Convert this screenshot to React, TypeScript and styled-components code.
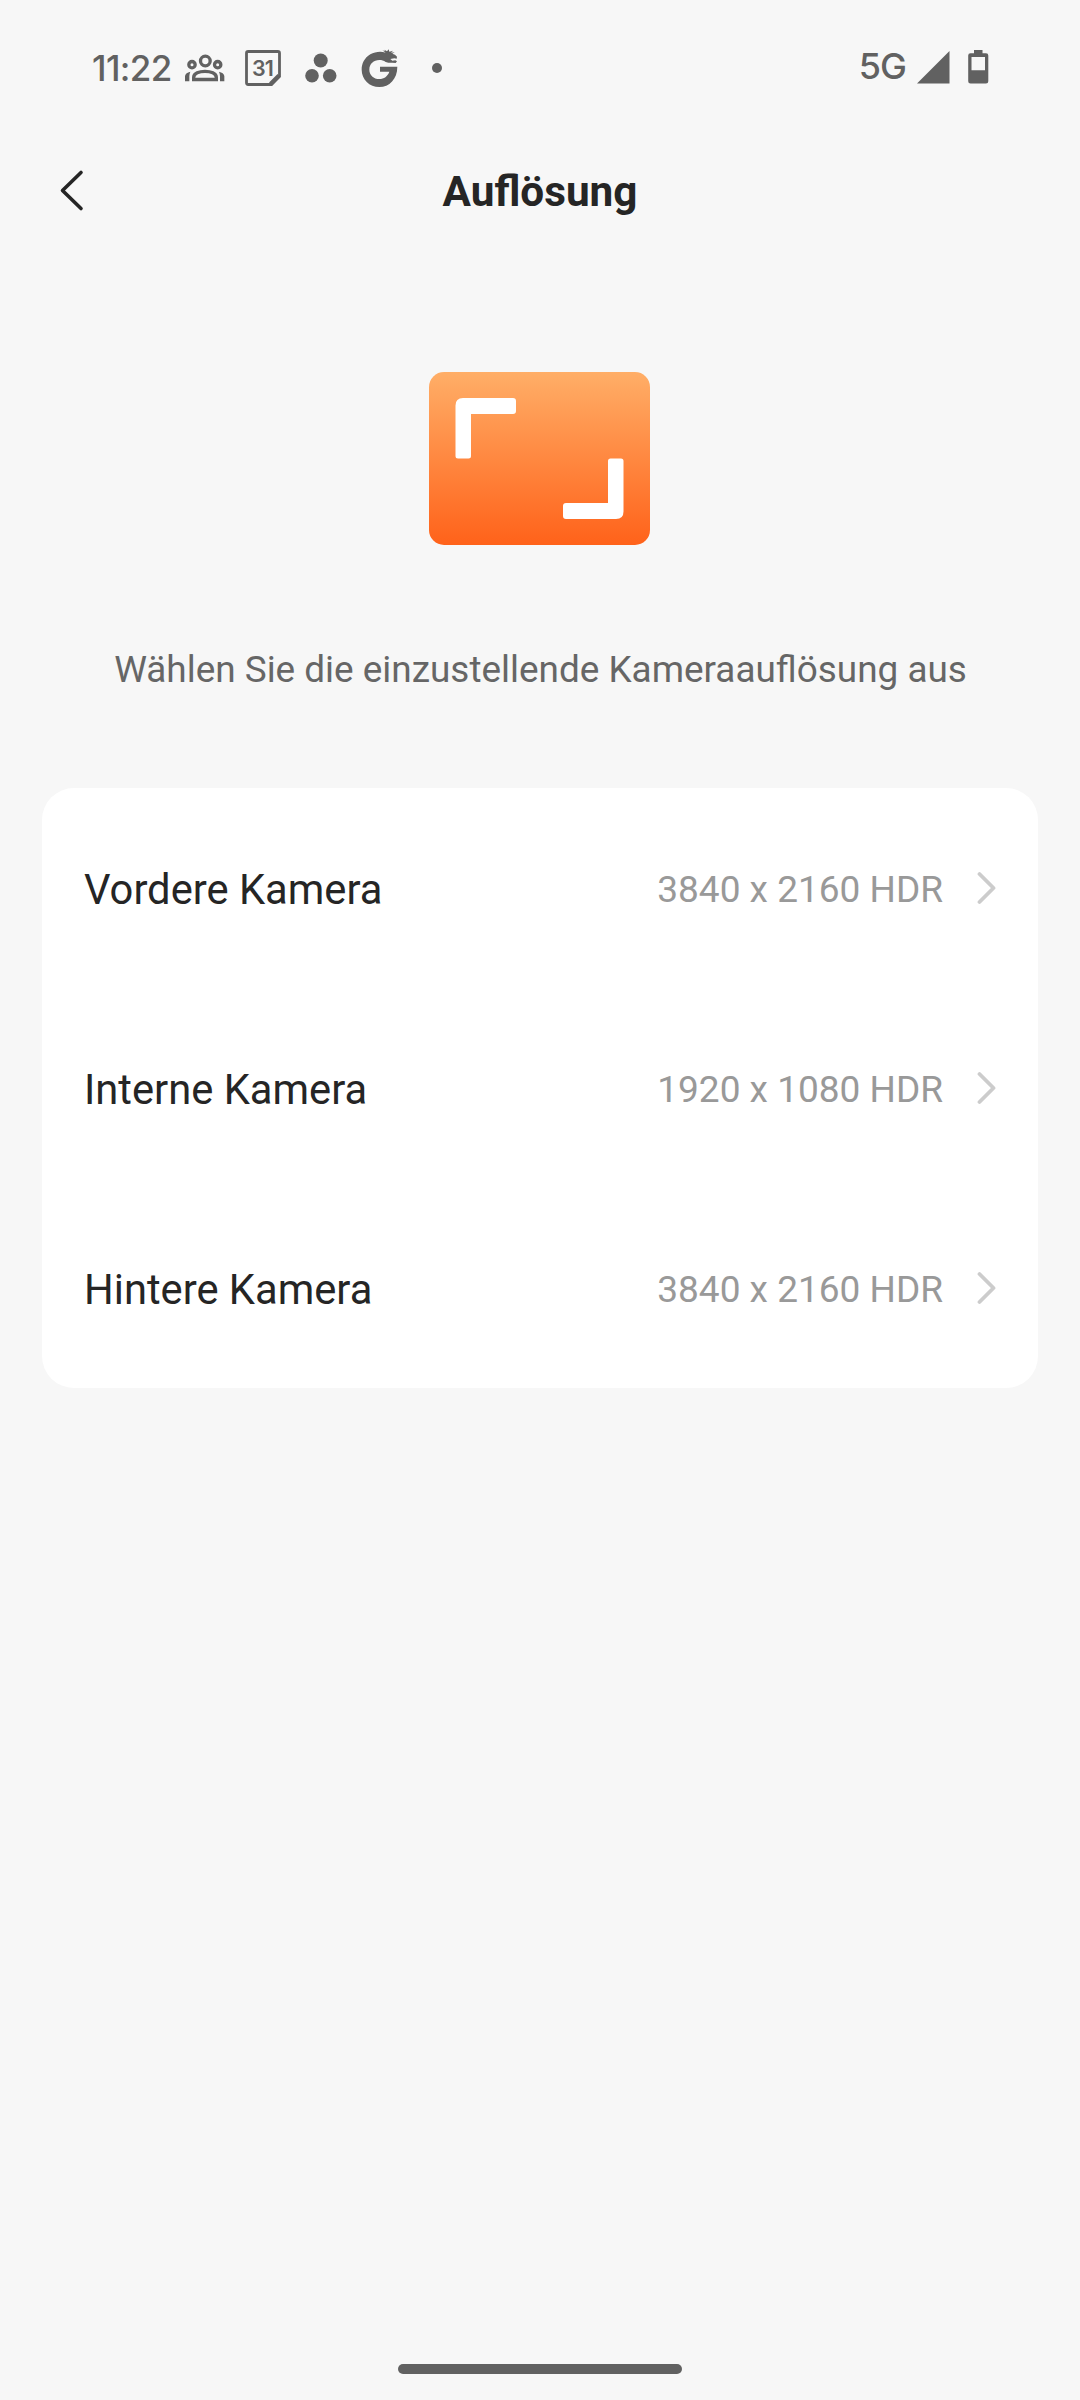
import React from "react";
import styled, { createGlobalStyle } from "styled-components";

const INK = "#616161";

const GlobalStyle = createGlobalStyle`
  *, *::before, *::after { box-sizing: border-box; }
  body { margin: 0; background: #f7f7f7; }
`;

const Screen = styled.div`
  display: flex;
  flex-direction: column;
  width: 1080px;
  height: 2400px;
  background: #f7f7f7;
  color: #252525;
  font-family: Roboto, "Noto Sans", sans-serif;
`;

const StatusBar = styled.header`
  display: flex;
  align-items: center;
  justify-content: space-between;
  height: 136px;
  padding: 0 91px 0 92px;
  color: ${INK};
`;

const StatusGroup = styled.div<{ $gap: number; $lift?: number }>`
  display: flex;
  align-items: center;
  gap: ${(p) => p.$gap}px;
  padding-bottom: ${(p) => p.$lift ?? 0}px;
`;

const Clock = styled.span`
  width: 80px;
  margin-right: 13px;
  padding-bottom: 1px;
  font: 500 35px/40px Inter, sans-serif;
  letter-spacing: -0.6px;
  white-space: nowrap;
`;

const Network = styled.span`
  padding-bottom: 2px;
  font: 450 36px/40px Inter, sans-serif;
  letter-spacing: -1px;
  white-space: nowrap;
`;

const Glyph = styled.svg`
  display: block;
  flex: none;
`;

const TitleBar = styled.div`
  display: grid;
  grid-template-columns: 120px 1fr 120px;
  align-items: center;
  height: 110px;
`;

const BackButton = styled.button`
  display: flex;
  padding: 0 0 0 58px;
  border: 0;
  background: none;
`;

const Title = styled.h1`
  margin: 0;
  padding-top: 2px;
  font-size: 42.3px;
  line-height: 50px;
  font-weight: 700;
  text-align: center;
`;

const Hero = styled.section`
  display: flex;
  flex-direction: column;
  align-items: center;
  height: 542px;
  padding-top: 126px;
`;

const Art = styled.div`
  margin-right: 2px;
`;

const Hint = styled.p`
  margin: 103px 0 0;
  padding-left: 1px;
  font-size: 36.9px;
  line-height: 44px;
  color: #666;
  white-space: nowrap;
`;

const Card = styled.ul`
  margin: 0 42px;
  padding: 0;
  list-style: none;
  border-radius: 32px;
  background: #fff;
`;

const Row = styled.li`
  display: flex;
  align-items: center;
  height: 200px;
  padding: 0 42px 0 42px;
`;

const Label = styled.span`
  flex: 1;
  padding-top: 3px;
  font-size: 41.7px;
  line-height: 50px;
`;

const Value = styled.span`
  margin-right: 33px;
  padding-top: 3px;
  font-size: 37px;
  line-height: 44px;
  color: #999;
`;

const NavArea = styled.footer`
  display: flex;
  justify-content: center;
  margin-top: auto;
  padding-bottom: 26px;
`;

const NavHandle = styled.div`
  width: 284px;
  height: 10px;
  border-radius: 5px;
  background: ${INK};
`;

const cameras = [
  { name: "Vordere Kamera", mode: "3840 x 2160 HDR" },
  { name: "Interne Kamera", mode: "1920 x 1080 HDR" },
  { name: "Hintere Kamera", mode: "3840 x 2160 HDR" },
];

const GroupIcon = () => (
  <Glyph width="40" height="28" viewBox="0 0 120 84" fill="none" stroke={INK} strokeWidth="10">
    <circle cx="61" cy="21" r="14.5" />
    <circle cx="21" cy="32" r="9.5" />
    <circle cx="98" cy="32" r="9.5" />
    <path d="M26 76.500V70.500C26 58 43 52 60 52S94 58 94 70.500V76.500Z" />
    <path d="M0 81.500V66Q2 56 16 53Q13 60 13 67V81.500ZM118 81.500V66Q116 56 102 53Q105 60 105 67V81.500Z" fill={INK} stroke="none" />
  </Glyph>
);

const CalendarIcon = () => (
  <Glyph width="36" height="36" viewBox="0 0 36 36">
    <path d="M3.200 1.500H32.800Q34.500 1.500 34.500 3.200V26.500L26.500 34.500H3.200Q1.500 34.500 1.500 32.800V3.200Q1.500 1.500 3.200 1.500Z" fill="none" stroke={INK} strokeWidth="2.800" />
    <path d="M25.500 34L34 25.500" stroke={INK} strokeWidth="4" />
    <text x="17.400" y="25.800" textAnchor="middle" fontFamily="Inter, sans-serif" fontWeight="600" fontSize="21.500" letterSpacing="-0.900" fill={INK}>31</text>
  </Glyph>
);

const DotsIcon = () => (
  <Glyph width="32" height="30" viewBox="0 0 32 30" fill={INK}>
    <circle cx="15.700" cy="7.500" r="7" />
    <circle cx="7" cy="22.800" r="6.800" />
    <circle cx="24.700" cy="22.800" r="6.800" />
  </Glyph>
);

const DragonIcon = () => (
  <Glyph width="38" height="40" viewBox="18 15 114 120" fill={INK}>
    <path d="M92 29C78 24 60 26 46 34C28 45 20 62 20 80C20 109 43 132 73 132C103 132 127 108 127 71H75V86H103C98 100 87 108 73 108C56 108 43 96 43 80C43 63 56 51 73 51C80 51 86 53 92 57L100 59L112 59L122 60L126 55L121 52L112 53L106 48L118 46L125 47L126 41L120 35L112 32L119 28L108 29L114 23L103 26L101 19L96 25L88 20L90 25L82 22Z" />
  </Glyph>
);

const SignalIcon = () => (
  <Glyph width="33" height="33" viewBox="0 0 33 33">
    <path d="M0 32.500L32.500 0V32.500Z" fill={INK} />
  </Glyph>
);

const BatteryIcon = () => (
  <Glyph width="21" height="34" viewBox="0 0 21 34">
    <path d="M6 0H14.500V3.200H18Q20.300 3.200 20.300 5.500V31.200Q20.300 33.500 18 33.500H2.500Q0.200 33.500 0.200 31.200V5.500Q0.200 3.200 2.500 3.200H6ZM3.500 7V20.300H17V7Z" fill={INK} fillRule="evenodd" />
  </Glyph>
);

const BackIcon = () => (
  <Glyph width="28" height="44" viewBox="0 0 28 44" fill="none" stroke="#252525" strokeWidth="3.600" strokeLinecap="round" strokeLinejoin="round">
    <path d="M23 3.500L4.500 21.500L23 39.500" />
  </Glyph>
);

const ChevronIcon = () => (
  <Glyph width="20" height="34" viewBox="0 0 20 34" fill="none" stroke="#ccc" strokeWidth="3.800" strokeLinecap="round" strokeLinejoin="round">
    <path d="M3.500 3L17.500 17L3.500 31" />
  </Glyph>
);

const ResolutionArt = () => (
  <Glyph width="221" height="173" viewBox="0 0 221 173">
    <defs>
      <linearGradient id="orange" x1="0" y1="0" x2="0" y2="1">
        <stop offset="0" stopColor="#ffae67" />
        <stop offset="1" stopColor="#ff621a" />
      </linearGradient>
    </defs>
    <rect width="221" height="173" rx="15" fill="url(#orange)" />
    <path d="M34 26H84Q87 26 87 29V39Q87 42 84 42H42V84Q42 86.500 39.500 86.500H29Q26.500 86.500 26.500 84V33.500Q26.500 26 34 26Z" fill="#fff" />
    <path d="M181.500 86.500H192Q194.500 86.500 194.500 89V139.500Q194.500 147 187 147H137Q134 147 134 144V134Q134 131 137 131H179V89Q179 86.500 181.500 86.500Z" fill="#fff" />
  </Glyph>
);

const NotificationDot = () => (
  <Glyph width="10" height="10" viewBox="0 0 10 10">
    <circle cx="5" cy="5" r="5" fill={INK} />
  </Glyph>
);

export default function App() {
  return (
    <Screen>
      <GlobalStyle />
      <StatusBar>
        <StatusGroup $gap={33}>
          <StatusGroup $gap={24}>
            <StatusGroup $gap={20}>
              <StatusGroup $gap={0}>
                <Clock>11:22</Clock>
                <GroupIcon />
              </StatusGroup>
              <CalendarIcon />
            </StatusGroup>
            <DotsIcon />
            <DragonIcon />
          </StatusGroup>
          <NotificationDot />
        </StatusGroup>
        <StatusGroup $gap={11} $lift={2}>
          <Network>5G</Network>
          <StatusGroup $gap={18}>
            <SignalIcon />
            <BatteryIcon />
          </StatusGroup>
        </StatusGroup>
      </StatusBar>
      <TitleBar>
        <BackButton aria-label="Zurück">
          <BackIcon />
        </BackButton>
        <Title>Auflösung</Title>
      </TitleBar>
      <Hero>
        <Art>
          <ResolutionArt />
        </Art>
        <Hint>Wählen Sie die einzustellende Kameraauflösung aus</Hint>
      </Hero>
      <Card>
        {cameras.map((camera) => (
          <Row key={camera.name}>
            <Label>{camera.name}</Label>
            <Value>{camera.mode}</Value>
            <ChevronIcon />
          </Row>
        ))}
      </Card>
      <NavArea>
        <NavHandle />
      </NavArea>
    </Screen>
  );
}
